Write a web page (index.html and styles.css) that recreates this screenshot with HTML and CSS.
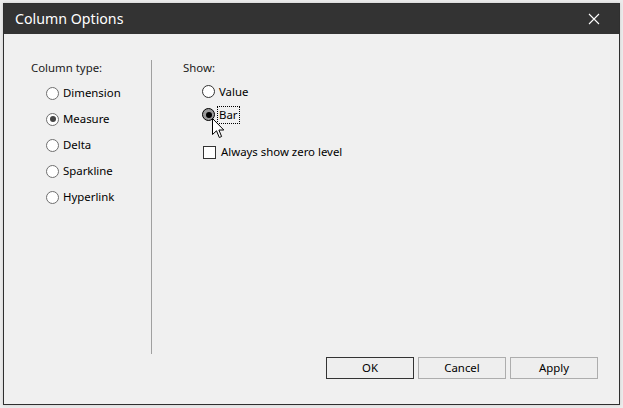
FILE: index.html
```html
<!DOCTYPE html>
<html>
<head>
<meta charset="utf-8">
<link rel="stylesheet" href="styles.css">
</head>
<body>
<div class="window">
  <div class="titlebar">
    <span class="title">Column Options</span>
    <span class="close"><svg width="12" height="12" viewBox="0 0 12 12"><path d="M1 1 L11 11 M11 1 L1 11" stroke="#fff" stroke-width="1.1" fill="none"/></svg></span>
  </div>
  <div class="client">
    <div class="main">
      <div class="panel left">
        <div class="caption">Column type:</div>
        <div class="list left-list">
          <div class="row"><span class="radio"></span><span class="lbl">Dimension</span></div>
          <div class="row"><span class="radio checked"></span><span class="lbl">Measure</span></div>
          <div class="row"><span class="radio"></span><span class="lbl">Delta</span></div>
          <div class="row"><span class="radio"></span><span class="lbl">Sparkline</span></div>
          <div class="row"><span class="radio"></span><span class="lbl">Hyperlink</span></div>
        </div>
      </div>
      <div class="panel right">
        <div class="caption">Show:</div>
        <div class="list right-list">
          <div class="row short"><span class="radio"></span><span class="lbl">Value</span></div>
          <div class="row short"><span class="radio pressed"></span><span class="lbl focus">Bar</span>
            <svg class="cursor" width="14" height="22" viewBox="0 0 14 22"><path d="M0.5 0.5 L0.5 16.5 L4.5 12.8 L7.3 19.5 L9.6 18.5 L6.9 12 L11.8 12 Z" fill="#fff" stroke="#000" stroke-width="1" stroke-linejoin="miter"/></svg>
          </div>
          <div class="row check-row"><span class="checkbox"></span><span class="lbl">Always show zero level</span></div>
        </div>
      </div>
    </div>
    <div class="footer">
      <button class="btn default">OK</button>
      <button class="btn">Cancel</button>
      <button class="btn">Apply</button>
    </div>
  </div>
</div>
</body>
</html>
```
FILE: styles.css
```css
html, body {
  margin: 0;
  padding: 0;
}
body {
  background: #ececec;
  width: 623px;
  height: 408px;
  overflow: hidden;
  font-family: "Noto Sans", "Open Sans", sans-serif;
  font-size: 11.4px;
  color: #000;
}
.window {
  margin: 3px 0 0 3px;
  width: 615px;
  height: 400px;
  border: 1px solid #2f2f2f;
  background: #f0f0f0;
  display: flex;
  flex-direction: column;
  box-shadow: 0 0 3px rgba(0,0,0,0.15);
}
.titlebar {
  height: 30px;
  background: #333333;
  display: flex;
  align-items: center;
  justify-content: space-between;
  padding: 0 19px 0 11px;
}
.title {
  color: #fff;
  font-size: 14.2px;
  line-height: 20px;
  margin-top: -1px;
}
.close {
  display: flex;
  margin-top: -1px;
}
.client {
  height: 370px;
  display: flex;
  flex-direction: column;
}
.main {
  display: flex;
  padding: 26px 0 0 27px;
  height: 294px;
}
.panel.left {
  width: 120px;
  border-right: 1px solid #a0a0a0;
}
.panel.right {
  padding-left: 31px;
}
.caption {
  line-height: 16px;
  height: 16px;
  color: #1a1a1a;
}
.list {
  display: flex;
  flex-direction: column;
  margin-top: 4px;
}
.left-list {
  padding-left: 15px;
}
.right-list {
  padding-left: 19px;
}
.row {
  height: 26px;
  display: flex;
  align-items: center;
  position: relative;
}
.row.short {
  height: 23px;
}
.row.check-row {
  margin-top: 14px;
  height: 24px;
}
.radio {
  width: 11px;
  height: 11px;
  border: 1px solid #333;
  border-radius: 50%;
  background: #fff;
  box-sizing: content-box;
  margin-right: 4px;
  position: relative;
  flex: none;
}
.left-list .radio {
  border-color: #6f6f6f;
}
.radio.checked::after {
  content: "";
  position: absolute;
  left: 2.5px;
  top: 2.5px;
  width: 6px;
  height: 6px;
  border-radius: 50%;
  background: #444;
}
.radio.pressed {
  background: #9a9a9a;
  border-color: #000;
}
.radio.pressed::after {
  content: "";
  position: absolute;
  left: 2.5px;
  top: 2.5px;
  width: 6px;
  height: 6px;
  border-radius: 50%;
  background: #000;
}
.lbl {
  line-height: 16px;
  white-space: nowrap;
}
.lbl.focus {
  outline: 1px dotted #000;
  outline-offset: 0;
  padding: 0 1px;
  margin-left: -1px;
}
.checkbox {
  width: 11px;
  height: 11px;
  border: 1px solid #333;
  background: #fff;
  margin: 0 5px 0 1px;
  flex: none;
}
.cursor {
  position: absolute;
  left: 10px;
  top: 15px;
}
.footer {
  display: flex;
  justify-content: flex-end;
  gap: 4px;
  padding: 3px 21px 0 0;
}
.btn {
  width: 88px;
  height: 22px;
  border: 1px solid #adadad;
  background: #eeeeee;
  font-family: "Noto Sans", "Open Sans", sans-serif;
  font-size: 11.4px;
  color: #000;
  padding: 0;
  line-height: 18px;
}
.btn.default {
  border-color: #333;
}
```
